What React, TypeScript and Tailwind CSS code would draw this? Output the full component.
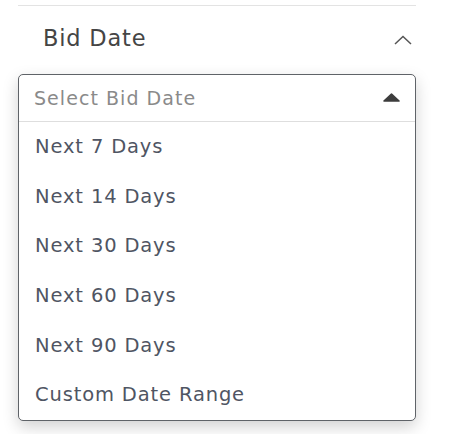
import { useState } from 'react'

export default function App() {
    const options = ['Next 7 Days', 'Next 14 Days', 'Next 30 Days', 'Next 60 Days', 'Next 90 Days', 'Custom Date Range']
    const [open] = useState(true)

    return (
        <div className="w-[450px] h-[434px] bg-white pt-[5px] px-[18px]" style={{ fontFamily: '"DejaVu Sans", sans-serif' }}>
            <div className="w-[398px] border-t border-[#e3e3e3]">
                {/* Section header */}
                <div className="h-[68px] flex items-center justify-between pl-[25px] pr-[4px]">
                    <span className="text-[22.5px] tracking-[0.8px] text-[#454545] pb-[3px]">Bid Date</span>
                    <svg width="18" height="10" viewBox="0 0 18 10" fill="none" className="mb-[1px]">
                        <path d="M1 9L9 1.5L17 9" stroke="#555" strokeWidth="1.5" />
                    </svg>
                </div>

                {/* Select */}
                <div className="relative border border-[#5f6368] rounded-[5px] bg-white shadow-[0_6px_16px_rgba(0,0,0,0.18)]">
                    <div className="h-[47px] flex items-center justify-between pl-[15px] pr-[15px] border-b border-[#dedede]">
                        <span className="text-[19px] tracking-[1.05px] text-[#8a8a8a]">Select Bid Date</span>
                        <svg width="17" height="9" viewBox="0 0 17 9" className="mb-[1px]">
                            <path d="M8.5 1L16 8H1Z" fill="#3d3d3d" strokeLinejoin="round" stroke="#3d3d3d" strokeWidth="1.6" />
                        </svg>
                    </div>
                    {open && (
                        <ul>
                            {options.map((o) => (
                                <li key={o} className="h-[49.6px] flex items-center pl-[16px] text-[19.5px] tracking-[0.85px] text-[#4f5563]">
                                    {o}
                                </li>
                            ))}
                        </ul>
                    )}
                </div>
            </div>
        </div>
    )
}
